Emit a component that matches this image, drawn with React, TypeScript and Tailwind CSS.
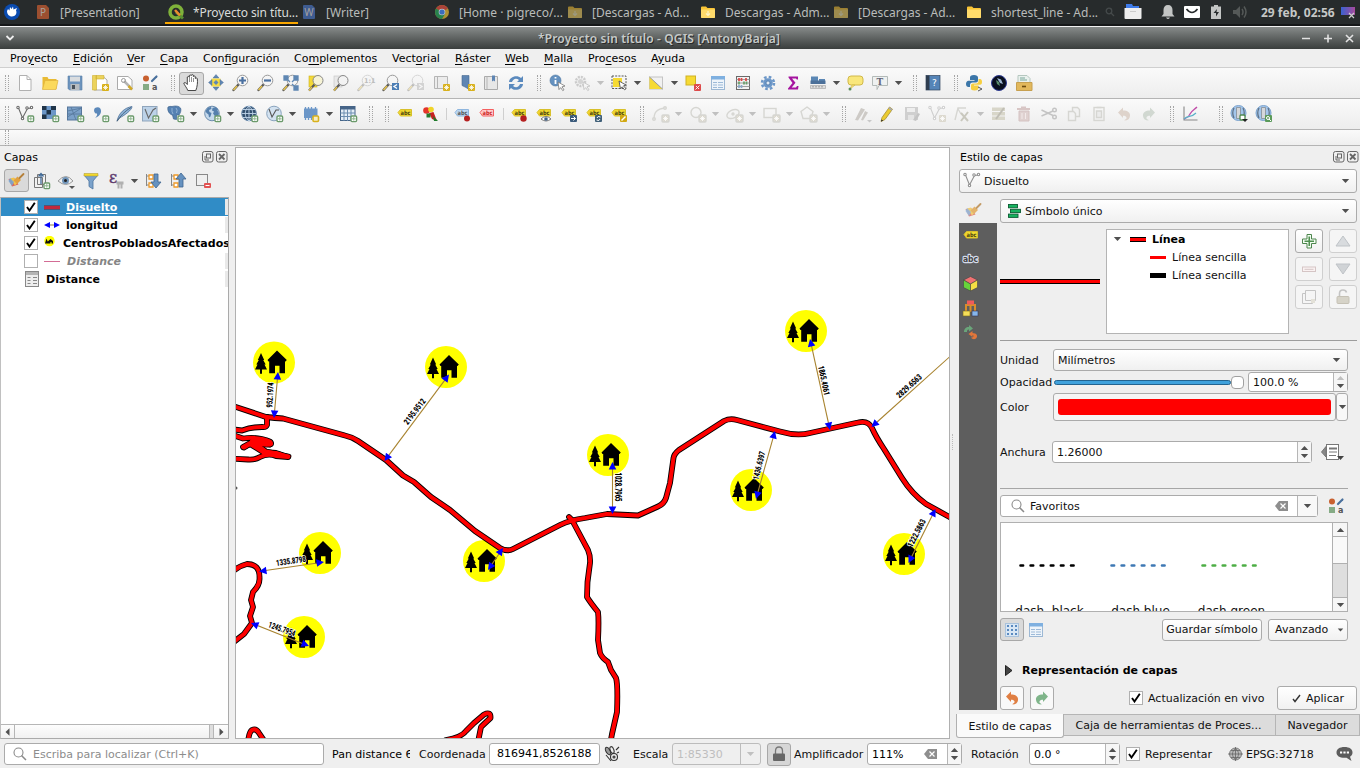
import React from 'react';
import type { ReactNode } from 'react';

/* ---------- icon primitives ---------- */

const Svg = ({ children }: { children: ReactNode }) => (
  <svg width="24" height="24" viewBox="0 0 24 24" fill="none" className="shrink-0">{children}</svg>
);
const Plus = ({ x = 15, y = 14 }) => (
  <g>
    <rect x={x} y={y} width="5.6" height="5.6" rx="1" fill="#fff" stroke="#6b9a6b" strokeWidth="1.4" />
    <path d={`M${x + 2.8} ${y + 1}v3.6M${x + 1} ${y + 2.8}h3.6`} stroke="#8fb58f" strokeWidth="1" />
  </g>
);
const Star = ({ x = 14, y = 13, c = '#d8b11c' }) => (
  <g>
    <rect x={x} y={y} width="7" height="7" rx="1" fill={c} />
    <path d={`M${x + 3.5} ${y + 1}v5M${x + 1} ${y + 3.5}h5M${x + 1.8} ${y + 1.8}l3.4 3.4M${x + 5.2} ${y + 1.8}l-3.4 3.4`} stroke="#fff" strokeWidth=".8" />
  </g>
);
const Lens = ({ children, dim }: { children?: ReactNode; dim?: boolean }) => (
  <Svg>
    <g opacity={dim ? 0.35 : 1}>
      <path d="M9.500 13.500l-5 5.500" stroke="#5a5a5a" strokeWidth="2.400" strokeLinecap="round" />
      <path d="M8 15l-3.500 4" stroke="#e8c44c" strokeWidth="1.500" />
      <circle cx="13.500" cy="9.500" r="5.300" fill="#f4f4f4" fillOpacity=".85" stroke="#9a9a9a" strokeWidth="1" />
      {children}
    </g>
  </Svg>
);
const Globe = ({ children, dark, map }: { children?: ReactNode; dark?: boolean; map?: boolean }) => (
  <Svg>
    <circle cx="12" cy="11.500" r="7.300" fill={dark ? '#33506f' : '#c5d9ec'} stroke="#6c8cad" />
    {map ? (
      <path d="M5.500 9l2.500-3.500 3-.500.500 2-2.500 1 .500 2 2 1-1 3.500-1.500 1-.500-3-2-1.500zM12.500 6l3-1 2.500 2-.500 1.500 1.500 3-1.500 3.500-2.500 1.500-.500-3-1.500-2 1-2-2-1z" fill="#5580ad" />
    ) : (
      <path d="M5 11.500h14M6 7.500h12M6 15.500h12M12 4v15M12 4c-5 4-5 11 0 15M12 4c5 4 5 11 0 15" stroke={dark ? '#bfd5ea' : '#53769b'} strokeWidth=".9" />
    )}
    {children}
  </Svg>
);
const BandGlobe = ({ children }: { children: ReactNode }) => (
  <Svg>
    <circle cx="11.500" cy="11" r="7.500" fill="#a3c6ec" stroke="#7ba2cc" />
    <path d="M7 6c-1.500 3-1.500 7 0 10M16 6c1.500 3 1.500 7 0 10" stroke="#5f7287" strokeWidth="1.300" />
    <path d="M9.500 5.500h4v11h-4z" fill="#d5d7da" stroke="#858d96" strokeWidth=".8" />
    {children}
  </Svg>
);
const VLine = ({ c = '#6a6a6a' }) => (
  <g stroke={c} strokeWidth="1.100">
    <path d="M5.500 6l4 10 5-9.500 4-.500" />
    <circle cx="5" cy="5.500" r="1.200" fill="#fff" /><circle cx="9.500" cy="16.500" r="1.200" fill="#fff" />
    <circle cx="14" cy="6" r="1.200" fill="#fff" /><circle cx="18.500" cy="5.500" r="1.200" fill="#fff" />
  </g>
);
const Tag = ({ c = '#f2d92f', s = '#d8c02c', t = '#4b4310', children }: { c?: string; s?: string; t?: string; children?: ReactNode }) => (
  <Svg>
    <path d="M5 10.500L7.500 7.500h11v6.500h-11z" fill={c} stroke={s} strokeWidth="1" />
    <text x="7.500" y="12.800" fontSize="6" fontWeight="700" fontFamily="DejaVu Sans" fill={t} textLength="10" lengthAdjust="spacingAndGlyphs">abc</text>
    {children}
  </Svg>
);
const Grey = ({ children }: { children: ReactNode }) => (
  <Svg><g stroke="#d6d6d2" strokeWidth="1.400">{children}</g></Svg>
);
const Undo = ({ c, flip }: { c: string; flip?: boolean }) => (
  <Svg>
    <path transform={flip ? 'translate(24 0) scale(-1 1)' : undefined} d="M6 10.500l5-5V8.500c4.500 0 7.500 2 7 5.500-.300 3-2.500 4.500-5.500 4.500 0-1.500 2.500-1 2-3-.300-1.200-1.500-1.800-3.500-1.800v2.300z" fill={c} />
  </Svg>
);
const StyleIcon = () => (
  <Svg>
    <circle cx="8" cy="7.500" r="3" fill="#c8602f" /><rect x="5" y="13" width="6" height="6" fill="#85ab85" />
    <path d="M14 10l4.500-4.500" stroke="#49709c" strokeWidth="2.200" strokeLinecap="round" />
    <text x="14" y="19" fontSize="8" fontWeight="700" fontFamily="DejaVu Sans" fill="#555">a</text>
  </Svg>
);
const TableIcon = () => (
  <Svg>
    <rect x="5.500" y="5.500" width="13" height="13" fill="#eef4fa" stroke="#9db8d4" /><path d="M5 5h14v3.500H5z" fill="#7fb0e0" />
    <path d="M7 11.500h4M12 11.500h5M7 14h4M12 14h5M7 16.500h4M12 16.500h5" stroke="#9dbad8" strokeWidth="1" />
  </Svg>
);
const Brush = () => (
  <Svg>
    <path d="M4.500 10l3.500 7.500 6.500-2-3.500-6z" fill="#dd665c" /><path d="M6 9.500l4-1 4 5-3 3z" fill="#f1c24b" /><path d="M4.500 12l1.500-3 4 4-2 4z" fill="#74a8d8" opacity=".85" />
    <path d="M9.500 11.500l4-4 3.500 3.500-4 4z" fill="#e0a040" /><path d="M15.500 9L19.500 5" stroke="#b5803a" strokeWidth="1.800" strokeLinecap="round" />
  </Svg>
);
const Caret = ({ dim }: { dim?: boolean }) => (
  <svg width="9" height="6" viewBox="0 0 9 6" className="shrink-0"><path d="M.8 1h7.400l-3.700 4z" fill={dim ? '#c0c0c0' : '#505050'} /></svg>
);
const Arrow = ({ dim }: { dim?: boolean }) => <div className="flex w-3 shrink-0 items-center justify-center"><Caret dim={dim} /></div>;
const Handle = ({ wide, first }: { wide?: boolean; first?: boolean }) => (
  <div className={`flex h-4 shrink-0 justify-end gap-0.5 pr-1 ${first ? 'w-[12.5px]' : wide ? 'w-[17px]' : 'w-4'}`}>
    <i className="h-full border-l border-dotted border-[#a5a5a5]" /><i className="h-full border-l border-dotted border-[#a5a5a5]" />
  </div>
);
const Sep = () => <div className="flex w-[7px] shrink-0 justify-center"><i className="h-3 w-px bg-[#cfcfcf]" /></div>;
const Slot = ({ children, on }: { children: ReactNode; on?: boolean }) => (
  <div className={on ? 'flex h-[23px] w-[25px] shrink-0 items-center justify-center rounded-[3px] border border-[#a8a8a8] bg-[#dadada]' : 'flex h-6 w-[25px] shrink-0 items-center justify-center'}>{children}</div>
);

/* ---------- top desktop panel ---------- */

const Folder = ({ dim }: { dim?: boolean }) => (
  <svg width="16" height="16" viewBox="0 0 16 16" opacity={dim ? 0.55 : 1}>
    <path d="M1 3.500Q1 2.500 2 2.500h4l1.500 1.500H14q1 0 1 1V13q0 1-1 1H2q-1 0-1-1z" fill="#fac536" /><path d="M1 5.500h14V13q0 1-1 1H2q-1 0-1-1z" fill="#ffdb6b" />
    <path d="M8 7v4M6 9.500l2 2 2-2" stroke="#fff5c8" strokeWidth="1.200" fill="none" />
  </svg>
);
const PlainFolder = () => (
  <svg width="16" height="16" viewBox="0 0 16 16">
    <path d="M1 3.500Q1 2.500 2 2.500h4l1.500 1.500H14q1 0 1 1V13q0 1-1 1H2q-1 0-1-1z" fill="#fac536" /><path d="M1 5.500h14V13q0 1-1 1H2q-1 0-1-1z" fill="#ffdb6b" />
  </svg>
);
const DocIcon = ({ c, t }: { c: string; t: string }) => (
  <svg width="16" height="16" viewBox="0 0 16 16"><path d="M2 2q0-1 1-1h8l3 3v10q0 1-1 1H3q-1 0-1-1z" fill={c} /><text x="8" y="12" fontSize="10" textAnchor="middle" fill="#a7a19d" fontFamily="Noto Sans">{t}</text></svg>
);
const QIcon = () => (
  <svg width="16" height="16" viewBox="0 0 16 16" fill="none"><circle cx="8" cy="8" r="6" stroke="#7fb23a" strokeWidth="3.500" /><path d="M8 8l7 6.500" stroke="#5b9030" strokeWidth="3" /><path d="M7 6l5 5.500" stroke="#ec8b2e" strokeWidth="2.500" /></svg>
);
const Chrome = () => (
  <svg width="16" height="16" viewBox="0 0 16 16" opacity=".72"><circle cx="8" cy="8" r="7" fill="#e2b735" /><path d="M8 8L2 4.500a7 7 0 0 1 12 0z" fill="#dd4b3e" /><path d="M8 8L2 4.500A7 7 0 0 0 8 15l3-5z" fill="#27a35a" /><circle cx="8" cy="8" r="3.300" fill="#fff" /><circle cx="8" cy="8" r="2.600" fill="#4285f4" /></svg>
);

const tasks: { t: string; i: ReactNode; on?: boolean; hi?: boolean }[] = [
  { t: '[Presentation]', i: <DocIcon c="#9c4f30" t="P" /> },
  { t: '*Proyecto sin títu...', i: <QIcon />, on: true, hi: true },
  { t: '[Writer]', i: <DocIcon c="#3e5c91" t="W" /> },
  { t: '[Home · pigreco/...', i: <Chrome /> },
  { t: '[Descargas - Ad...', i: <Folder dim /> },
  { t: 'Descargas - Adm...', i: <Folder /> },
  { t: '[Descargas - Ad...', i: <Folder dim /> },
  { t: 'shortest_line - Ad...', i: <PlainFolder /> },
];

const TopPanel = () => (
  <div className="flex h-[24px] shrink-0 items-center bg-[#272b2c] font-['Noto_Sans',sans-serif] text-[12px] text-[#b9bcba]">
    <div className="flex w-8 shrink-0 pl-1">
      <svg width="16" height="16" viewBox="0 0 16 16"><circle cx="8" cy="8" r="8" fill="#0a4bb0" /><path d="M3 7l1-2 1.500 1.500L6 3l1.500 2L9 2.500l.500 3L13 4l-1 2.500c1.500 3-1 6-4 6s-5-2.500-5-5.500z" fill="#fff" /></svg>
    </div>
    {tasks.map((k, i) => (
      <div key={i} className={k.on ? 'flex h-6 w-[133px] shrink-0 items-center gap-[9px] border-b-2 border-[#f9a700] pl-[3px] pt-0.5' : 'flex h-6 w-[133px] shrink-0 items-center gap-[9px] pl-[3px]'}>
        <div className="shrink-0">{k.i}</div><span className={k.hi ? 'whitespace-nowrap tracking-[-0.1px] text-[#dadcda]' : 'whitespace-nowrap'}>{k.t}</span>
      </div>
    ))}
    <div className="ml-[9px] flex w-[13px]"><svg width="10" height="10" viewBox="0 0 10 10" fill="none" stroke="#454a4b" strokeWidth="1.300"><circle cx="4" cy="4" r="2.800" /><path d="M6 6l3 3" /></svg></div>
    <svg className="ml-[6px] shrink-0" width="18" height="18" viewBox="0 0 18 18"><path d="M2 1h6l1 2h6v9H2z" fill="#3e7bea" /><path d="M.500 5h17v10q0 1-1 1h-15q-1 0-1-1z" fill="#eee" /><path d="M6 8.500h6" stroke="#ccc" /></svg>
    <svg className="ml-[18px] shrink-0" width="16" height="16" viewBox="0 0 16 16" fill="#c3c5c4"><path d="M8 1c-3 0-4.500 2-4.500 5v4L1.500 12.500h13L12.500 10V6c0-3-1.500-5-4.500-5zM6 13.500h4Q8 16.500 6 13.500z" /></svg>
    <svg className="ml-2 shrink-0" width="16" height="14" viewBox="0 0 16 14"><rect y="1" width="16" height="12" rx="1" fill="#fff" /><path d="M2.500 4Q8 11 13.500 4" stroke="#272b2c" strokeWidth="1.600" fill="none" /></svg>
    <svg className="ml-2 shrink-0" width="16" height="16" viewBox="0 0 16 16"><path d="M3 2.500h3V1h4v1.500h3V15H3z" fill="#c3c5c4" /><path d="M9 5L5.500 9H8v3.500L11 8H8.500z" fill="#272b2c" /></svg>
    <svg className="ml-2 shrink-0" width="16" height="16" viewBox="0 0 16 16" fill="none" stroke="#555958" strokeWidth="1.500"><path d="M1 6h3l4-4v12l-4-4H1z" fill="#555958" stroke="none" /><path d="M10 5q2 3 0 6M12 2.500q4 5.500 0 11" /></svg>
    <span className="ml-[13px] w-[79px] shrink-0 whitespace-nowrap text-[12px] font-bold text-[#c5c7c6]">29 feb, 02:56</span>
    <svg className="shrink-0" width="16" height="14" viewBox="0 0 16 14"><defs><linearGradient id="mon"><stop stopColor="#3a62d0" /><stop offset="1" stopColor="#a74a9c" /></linearGradient></defs><rect x="1" y="2" width="14" height="8" fill="url(#mon)" /><path d="M9 8l5 5M14 8l-5 5" stroke="#ccc" strokeWidth="1.200" /></svg>
  </div>
);

const TitleBar = () => (
  <div className="flex h-[25px] shrink-0 items-center justify-between border-t-2 border-[#161819] bg-gradient-to-b from-[#8b8f8e] to-[#3a3e3d] px-[5px] shadow-[inset_0_1px_0_#f2f2f2]">
    <svg width="12" height="12" viewBox="0 0 12 12" fill="none" stroke="#eee" strokeWidth="1.800"><path d="M1.500 4l3.500 3.500L8.500 4" /></svg>
    <span className="whitespace-nowrap pl-0.5 pt-0.5 font-['Noto_Sans',sans-serif] text-[12px] font-semibold tracking-[0.15px] text-[#c6cac9] [text-shadow:1px_1px_0_#2a2a2a]">*Proyecto sin título - QGIS [AntonyBarja]</span>
    <svg width="56" height="12" viewBox="0 0 56 12" fill="none" stroke="#e2e2e2" strokeWidth="1.600"><path d="M3 6.500h8M25 6.500h8M29 2.500v8M47 3l7 7M54 3l-7 7" /></svg>
  </div>
);

const menus: [string, string, string, string][] = [
  ['Pro', 'y', 'ecto', 'w-[63px]'], ['', 'E', 'dición', 'w-[54px]'], ['', 'V', 'er', 'w-[33px]'], ['', 'C', 'apa', 'w-[43px]'],
  ['Con', 'f', 'iguración', 'w-[91px]'], ['Co', 'm', 'plementos', 'w-[98px]'], ['Vect', 'o', 'rial', 'w-[63px]'], ['', 'R', 'áster', 'w-[50px]'],
  ['', 'W', 'eb', 'w-[39px]'], ['', 'M', 'alla', 'w-[44px]'], ['Pro', 'c', 'esos', 'w-[63px]'], ['A', 'y', 'uda', 'w-[60px]'],
];

const MenuBar = () => (
  <div className="flex h-[19px] shrink-0 items-center border-b border-[#cfcfcf] pl-[10px] text-black">
    {menus.map(([a, b, c, w]) => (
      <span key={a + b + c} className={`${w} shrink-0 whitespace-nowrap`}>{a}<u className="underline-offset-2">{b}</u>{c}</span>
    ))}
  </div>
);

/* ---------- toolbars ---------- */

const ToolRow1 = () => (
  <div className="flex h-[31px] shrink-0 items-center border-b border-[#b4b4b4] bg-gradient-to-b from-[#fafafa] to-[#ededed]">
    <Handle first />
    <Slot><Svg><path d="M6.500 4.500h7.500l4 4V19.500H6.500z" fill="#fff" stroke="#b0b0b0" /><path d="M14 4.500v4h4" stroke="#b0b0b0" /></Svg></Slot>
    <Slot><Svg><path d="M4.500 6h5l1 2h8v10h-14z" fill="#e9bb35" /><path d="M4.500 18.500L7 9.500h13l-2 9z" fill="#fbd95c" stroke="#dfb23c" strokeWidth=".7" /></Svg></Slot>
    <Slot><Svg><path d="M5 5h14v14H6.500L5 17.500z" fill="#6c93bd" stroke="#5a7fa8" strokeWidth=".6" /><rect x="7" y="5.500" width="10" height="5" fill="#d9dcdf" /><rect x="7.500" y="13" width="9" height="6" fill="#b8bcc0" /><rect x="9" y="14" width="3" height="4" fill="#49515a" /></Svg></Slot>
    <Slot><Svg><path d="M6 5.500h9l4 3.500v10H6z" fill="#fff" stroke="#aaa" /><path d="M4.500 4.500h4V19h-4zM8 4.500h8v3.500H8z" fill="#ecd35c" stroke="#cfae30" strokeWidth=".6" /><Star /></Svg></Slot>
    <Slot><Svg><path d="M4.500 5.500h10.500l4 3.500v9.500H4.500z" fill="#fff" stroke="#aaa" /><path d="M11 10l6 6" stroke="#b5b5b5" strokeWidth="2.500" /><path d="M15.500 15l3.500 3.500" stroke="#d2a926" strokeWidth="2.500" /><circle cx="10.500" cy="9.500" r="2" stroke="#999" /></Svg></Slot>
    <Slot><StyleIcon /></Slot>
    <Handle />
    <Slot on><Svg><path d="M8 20c-1-3-4-6-4-7.500 1-1 2.500 0 3.500 1.500V6.500q1-1 2 0V5q1-1 2 0v-.500q1-1 2 0V6q1-1 2 0v2q1-1 2 0c.500 4 0 8-1.500 12z" transform="translate(.8 -.5)" fill="#fff" stroke="#333" strokeWidth=".9" /><path d="M10.500 6v5M12.500 6v5M14.500 7v4" stroke="#777" strokeWidth=".8" /></Svg></Slot>
    <Slot><Svg><path d="M7.500 7.500h9v8h-9z" fill="#f6dc45" /><path d="M12 3.500l3 3.500H9zM12 19.500l3-3.500H9zM4.500 11.500l3.500-3v6zM19.500 11.500l-3.500-3v6z" fill="#5f87b5" stroke="#47688f" strokeWidth=".4" /><path d="M12 9l2.500 2.500L12 14l-2.500-2.500z" fill="#5f87b5" /></Svg></Slot>
    <Slot><Lens><path d="M13.500 6v7M10 9.500h7" stroke="#4a70a0" strokeWidth="2.200" /></Lens></Slot>
    <Slot><Lens><path d="M10 9.500h7" stroke="#4a70a0" strokeWidth="2.200" /></Lens></Slot>
    <Slot><Lens><path d="M5 5h4v4H5zM15 5h4v4h-4zM15 15h4v4h-4zM9 9l2 2M15 9l-2 2M15 15l-2-2" fill="#5f87b3" stroke="#5f87b3" strokeWidth="1.300" /></Lens></Slot>
    <Slot><Svg><rect x="5" y="5" width="8" height="11" fill="#f4d936" stroke="#c9ae20" strokeWidth=".6" /><path d="M10.500 13.500l-5.500 6" stroke="#5a5a5a" strokeWidth="2.200" /><path d="M8 16l-3 3.500" stroke="#e8c44c" strokeWidth="1.300" /><circle cx="14" cy="9.500" r="5" fill="#f6f3d5" stroke="#888" /></Svg></Slot>
    <Slot><Svg><rect x="5" y="5" width="8" height="11" fill="#e9e9e9" stroke="#c4c4c4" strokeWidth=".6" /><path d="M10.500 13.500l-5.500 6" stroke="#5a5a5a" strokeWidth="2.200" /><path d="M8 16l-3 3.500" stroke="#e8c44c" strokeWidth="1.300" /><circle cx="14" cy="9.500" r="5" fill="#f3f3f3" stroke="#888" /></Svg></Slot>
    <Slot><Lens dim><text x="10" y="12" fontSize="6.500" fontWeight="700" fontFamily="DejaVu Sans" fill="#555">1:1</text></Lens></Slot>
    <Slot><Lens><rect x="13" y="12" width="7" height="7" fill="#4c7eb5" /><path d="M18 13.500l-3 2 3 2" stroke="#fff" strokeWidth="1.300" /></Lens></Slot>
    <Slot><Lens dim><rect x="13" y="12" width="7" height="7" fill="#999" /><path d="M15 13.500l3 2-3 2" stroke="#fff" strokeWidth="1.300" /></Lens></Slot>
    <Slot><Svg><path d="M5.500 5.500h13v12h-13z" fill="#ececec" stroke="#b5b5b5" /><path d="M8.500 5.500v12" stroke="#b5b5b5" /><Star /></Svg></Slot>
    <Slot><Svg><path d="M8 4.500h7v14l-3-2-4-2z" fill="#5e85b3" stroke="#46688f" strokeWidth=".6" /><Star /></Svg></Slot>
    <Slot><Svg><path d="M5.500 5.500h13v13h-13z" fill="#e7e7e7" stroke="#aaa" /><path d="M8 5.500v13" stroke="#b5b5b5" /><path d="M13 4.500h3v6l-1.500-1-1.500 1z" fill="#5e85b3" /></Svg></Slot>
    <Slot><Svg><path d="M5 11c0-5 8-8 12-4l2-2v6h-6l2-2c-3-2.500-6-1-7 2zM19 13c0 5-8 8-12 4l-2 2v-6h6l-2 2c3 2.500 6 1 7-2z" fill="#5b8abe" /></Svg></Slot>
    <Handle />
    <Slot><Svg><circle cx="10.500" cy="9.500" r="5.500" fill="#6491c0" stroke="#4c739e" strokeWidth=".6" /><path d="M10.500 9v4M10.500 6v1.500" stroke="#fff" strokeWidth="1.800" /><path d="M13 11l7 4-3 .8 2 3-1.300.8-2-3-1.700 2z" fill="#fff" stroke="#777" strokeWidth=".8" /></Svg></Slot>
    <Slot><Svg><g opacity=".25"><circle cx="10.500" cy="10.500" r="4.500" stroke="#555" strokeWidth="2.500" strokeDasharray="2 1" /><circle cx="10.500" cy="10.500" r="2.500" fill="#777" /><path d="M13 11l7 4-3 .8 2 3-1.300.8-2-3-1.700 2z" fill="#fff" stroke="#555" /></g></Svg></Slot>
    <Arrow dim />
    <Slot><Svg><rect x="5" y="5" width="14" height="12.500" stroke="#555" strokeDasharray="2 1.200" /><rect x="6" y="7" width="9" height="9" fill="#f6da33" /><path d="M12 10l7 4-2.500.8 2.500 3-1.500 1-2.300-3-1.700 2z" fill="#fff" stroke="#555" strokeWidth=".9" /></Svg></Slot>
    <Arrow />
    <Slot><Svg><rect x="5.500" y="6" width="13" height="12" fill="#f1f1f1" stroke="#c4c4c4" /><path d="M5.500 6l13 12h-13z" fill="#f6da33" /><path d="M5.500 6l13 12" stroke="#999" /></Svg></Slot>
    <Arrow />
    <Slot><Svg><rect x="5" y="5" width="9.500" height="9" fill="#f6da33" stroke="#cfb224" /><rect x="13" y="13" width="7" height="7" rx="1" fill="#dd4b4b" /><path d="M14.500 18.500l4-4M15 15l3 3" stroke="#fff" strokeWidth=".9" /></Svg></Slot>
    <Slot><TableIcon /></Slot>
    <Slot><Svg><rect x="5.500" y="5.500" width="13" height="13" fill="#f2f2f2" stroke="#6a6a6a" /><path d="M5 8.500h14M5 12h14M5 15.500h14" stroke="#888" strokeWidth=".8" /><path d="M8 7v3M10.500 7v3M15 7v3" stroke="#d44" strokeWidth="1.700" /><path d="M8 10.500v3M13 10.500v3M15.500 10.500v3" stroke="#6a9f6a" strokeWidth="1.700" /><path d="M8 14v3M10.500 14v3" stroke="#8aa9ca" strokeWidth="1.700" /></Svg></Slot>
    <Slot><Svg><circle cx="12" cy="12" r="6" stroke="#6c97c8" strokeWidth="2.600" strokeDasharray="2.600 2.110" /><circle cx="12" cy="12" r="4.800" fill="#6c97c8" /><circle cx="12" cy="12" r="2" fill="#dfeaf5" stroke="#426ea0" strokeWidth=".7" /></Svg></Slot>
    <Slot><Svg><path d="M7.500 5.500H17v3h-1.200L15 7.500h-4l3.500 4.300-3.800 4.700H15l1-1.500h1.500l-.500 3.500H7v-1l4.500-5.500L7.500 6.500z" fill="#a5149f" /></Svg></Slot>
    <Slot><Svg><path d="M5 5.500h7v5H5zM13 8h6v3h-6z" fill="#5b87b5" /><path d="M4.500 9.500h15v3.500h-15z" fill="#4c7099" /><path d="M4.500 14.500h15v3h-15z" fill="#ddd" stroke="#aaa" strokeWidth=".7" /><path d="M7 15v1.500M10 15v1.500M13 15v1.500M16 15v1.500" stroke="#777" strokeWidth=".8" /></Svg></Slot>
    <Arrow />
    <Slot><Svg><rect x="5" y="5" width="15" height="9" rx="3" fill="#f9e77b" stroke="#d0b84a" /><path d="M9 14l-2 4 5-4z" fill="#f9e77b" stroke="#d0b84a" strokeWidth=".7" /><circle cx="7" cy="18" r="1.500" fill="#5b8c5b" /></Svg></Slot>
    <Slot><Svg><path d="M4.500 5.500h15v9H11l-2 4v-4H4.500z" fill="#eef1f1" stroke="#b3bab8" /><text x="8.500" y="13.500" fontSize="9" fontWeight="700" fontFamily="DejaVu Serif" fill="#667">T</text></Svg></Slot>
    <Arrow />
    <Handle />
    <Slot><Svg><rect x="5" y="4.500" width="14" height="14.500" fill="#5584b7" stroke="#33475e" strokeWidth=".7" /><path d="M5 4.500h3.500V19H5z" fill="#2e3d4f" /><text x="11" y="15" fontSize="9" fontFamily="DejaVu Sans" fill="#fff">?</text></Svg></Slot>
    <Handle />
    <Slot><Svg><path d="M12 4c-3 0-4 1-4 2.500V9h4.500v.700H6.500C5 9.700 4 11 4 13s1 3 2.500 3H8v-2c0-1.500 1-2.500 2.500-2.500H14c1.200 0 2-.8 2-2v-3C16 5 14.500 4 12 4z" fill="#3b76a8" /><path d="M12.500 19.500c3 0 4-1 4-2.500v-2.500H12v-.700h6c1.500 0 2-1 2-3S19 8 18 8h-1.500v2c0 1.500-1 2.500-2.500 2.500h-3c-1.200 0-2 .8-2 2v3c0 1.200 1 2 3.500 2z" fill="#f7cf3f" /><path d="M16 16l4 2-4 2" stroke="#555" /></Svg></Slot>
    <Slot><Svg><circle cx="12" cy="12" r="7.500" fill="#0a1020" stroke="#2f3c94" strokeWidth="1" /><path d="M10 7l4 1.500 2 4.500-3-1z" fill="#9fb9d4" /><path d="M9 9l3 2 1 4-3-2z" fill="#5b8c6c" /></Svg></Slot>
    <Slot><Svg><path d="M6 4.500h9l3 3v6H6z" fill="#eaf1ee" stroke="#b5c7bf" /><path d="M8 7h5M8 9h7" stroke="#7ba89a" /><path d="M4.500 11.500h15.500v8H4.500z" fill="#e2b85c" stroke="#c7a050" /><path d="M10 15.500h4" stroke="#6b4b10" strokeWidth="1.600" /></Svg></Slot>
  </div>
);

const GStar = () => <Star c="#dcd9cf" />;

const ToolRow2 = () => (
  <div className="flex h-[31px] shrink-0 items-center border-b border-[#b4b4b4] bg-gradient-to-b from-[#fafafa] to-[#ededed]">
    <Handle first />
    <Slot><Svg><VLine /><Plus /></Svg></Slot>
    <Slot><Svg><rect x="4" y="4" width="14" height="13" fill="#6c97c8" /><path d="M4 4h4.500v4H4zM13 4h5v4h-5zM8.500 8H13v4.500H8.500zM4 12.500h4.500V17H4z" fill="#1f3448" /><Plus /></Svg></Slot>
    <Slot><Svg><rect x="4.500" y="5" width="14" height="13" fill="#7ba0c8" stroke="#56779b" /><path d="M4.500 9l14-3M4.500 15l14-9M8 5l5 13M4.500 12h14" stroke="#56779b" strokeWidth=".8" /><Plus /></Svg></Slot>
    <Slot><Svg><path d="M7 6c3.500-2 6.500 0 6 4-.5 3-3 5-6 6 1.500-1.500 2.500-3 2-4.500C6.500 12 5 8 7 6z" fill="#5b88ba" /><Plus /></Svg></Slot>
    <Slot><Svg><path d="M4 19C6 11 11 6 19 4.500 19 8 12 13 6.500 16z" fill="#8fb4da" stroke="#4b6f95" strokeWidth=".8" /><path d="M4 19.500C7 14 12 9 18 5.500" stroke="#3b556f" strokeWidth=".8" /><Plus /></Svg></Slot>
    <Slot><Svg><rect x="4.500" y="4.500" width="14.500" height="14.500" fill="#bcd2e8" stroke="#8fa5bc" /><path d="M7 7l3.500 9L15 8l3-2" stroke="#666" strokeWidth="1.100" /><Plus /></Svg></Slot>
    <Slot><Svg><path d="M5 5q2-1 4-.500 6-1.500 8.500 1.500c1 2 0 5-1.500 7h-2.500v4.500l-3-.5-1-4C6.500 12.500 4 8.500 5 5z" fill="#5581b2" stroke="#41658f" strokeWidth=".7" /><path d="M9 6q-.5 4 1 6M13 6q2 2 .5 5" stroke="#a9c5e2" strokeWidth=".7" /><Plus /></Svg></Slot><Arrow />
    <Slot><Globe map><Plus /></Globe></Slot><Arrow />
    <Slot><Globe dark><Plus /></Globe></Slot>
    <Slot><Svg><circle cx="12" cy="11.500" r="7.300" fill="#d3e2f0" stroke="#8aa4be" /><path d="M7 7l3 8 4-7h3" stroke="#555" strokeWidth="1.100" /><Plus /></Svg></Slot><Arrow />
    <Slot><Svg><path d="M5 6.500h13.500V16H5z" fill="#6c97c8" /><path d="M6.500 5v13M9.500 5v13M12.500 5v13M16.500 5v13" stroke="#6c97c8" strokeWidth="1.300" /><rect x="14" y="14" width="5.500" height="5.500" rx="1" fill="#f6edc4" stroke="#d8b11c" strokeWidth="1.600" /></Svg></Slot><Arrow />
    <Slot><Svg><rect x="4.500" y="4.500" width="14.500" height="14" fill="#e4eef7" stroke="#466588" /><path d="M4.500 4.500H19v3H4.500z" fill="#466588" /><path d="M4.500 11H19M4.500 14.500H19M8 7v12M11.500 7v12M15 7v12" stroke="#6b8db0" /><Plus /></Svg></Slot>
    <Handle /><Handle />
    <Slot><Tag /></Slot>
    <Slot><Svg><path d="M11 11l4.500-1 3.500 9-5-2z" fill="#c81e1e" /><circle cx="8.500" cy="8.500" r="3.300" fill="#e4342a" /><circle cx="13" cy="7.500" r="2.800" fill="#f0d429" /><rect x="8.500" y="11.500" width="4" height="4" fill="#237a2d" /><path d="M15 14l5 5h-4z" fill="#1e7b2a" /></Svg></Slot>
    <Sep />
    <Slot><Tag c="#bcd8f4" s="#8fb6de" t="#555"><circle cx="17" cy="16.500" r="3" fill="#b52020" /></Tag></Slot>
    <Slot><Tag c="#fcc" s="#f46060" t="#c22" /></Slot>
    <Sep />
    <Slot><Tag><circle cx="16.500" cy="16.500" r="3.200" fill="#b52020" /></Tag></Slot>
    <Slot><Tag><path d="M9 17q5-5 10 0-5 4-10 0z" fill="#fff" stroke="#777" /><circle cx="14" cy="17" r="1.800" fill="#40638c" /></Tag></Slot>
    <Slot><Tag><rect x="13" y="13" width="7" height="7" rx="1" fill="#3b5b7c" /><path d="M14 16.500h4.500M16.500 14.500l2 2-2 2" stroke="#fff" /></Tag></Slot>
    <Slot><Tag><rect x="13" y="13" width="7" height="7" rx="1" fill="#3f5f78" /><path d="M18.500 15q-3-1.500-3.500 1M14.500 18q3 1.500 3.500-1" stroke="#fff" /></Tag></Slot>
    <Slot><Tag><rect x="13" y="13" width="7" height="7" rx="1" fill="#d2a914" /><path d="M14.500 18.500l4-4" stroke="#fff" strokeWidth="1.500" /></Tag></Slot>
    <Handle />
    <Slot><Grey><path d="M6 17c0-7 3-10 11-11" /><circle cx="6" cy="17" r="1.300" fill="#eee" /><circle cx="17" cy="6" r="1.300" fill="#eee" /><GStar /></Grey></Slot><Arrow dim />
    <Slot><Grey><circle cx="11" cy="10.500" r="5" /><GStar /></Grey></Slot><Arrow dim />
    <Slot><Grey><ellipse cx="11" cy="12" rx="6.500" ry="4" transform="rotate(-25 11 12)" /><circle cx="11" cy="12" r="1" /><GStar /></Grey></Slot><Arrow dim />
    <Slot><Grey><rect x="5" y="6.500" width="12" height="9" /><GStar /></Grey></Slot><Arrow dim />
    <Slot><Grey><path d="M11 5l6 4.500-2 7H7l-2-7z" /><GStar /></Grey></Slot><Arrow dim />
    <Handle wide />
    <Slot><Svg><path d="M5 18l6-12 4 1.500-7 11zM11 18l4-9 3 1.500-5 8z" fill="#cdcac6" /><path d="M17 18h5l-2.500 2.500z" fill="#c8c8c8" /></Svg></Slot>
    <Slot><Svg><path d="M6 19.500l1-4L14.500 5l3 2.200L10 17.500z" fill="#ebcb30" stroke="#a58e35" strokeWidth=".8" /><path d="M14.500 5l3 2.200-1 1.500-3-2z" fill="#aaa" /><path d="M6 19.500l.600-2 1.600 1.200z" fill="#222" /></Svg></Slot>
    <Slot><Svg><path d="M5 5h13v13H5z" fill="#cfcfcf" /><rect x="7" y="6" width="8" height="4" fill="#eee" /><rect x="8" y="13" width="6" height="5" fill="#e4e4e4" /><path d="M13 18l5-7 2 1-4 7z" fill="#c4c4c4" /></Svg></Slot>
    <Slot><Svg><VLine c="#cfcfcf" /><GStar /></Svg></Slot>
    <Slot><Grey><path d="M5 18L8 6h8M8 7l3 5" /><path d="M11 11l7 8M18 10l-7 9" stroke="#c9c8be" strokeWidth="2" /></Grey></Slot><Arrow dim />
    <Slot><Svg><path d="M5 5.500h13v3.500H5zM5 10h13v3.500H5zM5 14.500h13V18H5z" fill="#d8d6c9" /><path d="M9 17L17 6" stroke="#c0beb5" strokeWidth="2" /></Svg></Slot>
    <Slot><Svg><path d="M5 7h13M9 5.500h5" stroke="#d8c6c5" strokeWidth="2" /><path d="M7 9h10v10H7z" fill="#dfd1d0" stroke="#d4c2c1" /><path d="M10 11v6M13.500 11v6" stroke="#f2eaea" /></Svg></Slot>
    <Slot><Grey><path d="M4.500 8L16 13.500M4.500 14L16 9" stroke="#c4c4c4" /><circle cx="17.500" cy="15" r="1.800" stroke="#c4c4c4" /><circle cx="17.500" cy="8" r="1.800" stroke="#c4c4c4" /></Grey></Slot>
    <Slot><Grey><path d="M10.500 5.500h5l2 2v7h-7z" fill="#f2f2f2" /><path d="M6.500 9.500h5l2 2v7h-7z" fill="#f2f2f2" /></Grey></Slot>
    <Slot><Grey><rect x="7" y="5.500" width="10" height="13" /><path d="M9.500 5.500h5M9.500 9v6.500h5V9z" fill="#ebebeb" /></Grey></Slot>
    <Slot><Undo c="#ded3cb" /></Slot>
    <Slot><Undo c="#d1d8d1" flip /></Slot>
    <Handle />
    <Slot><Svg><path d="M6 4.500V18h13.500" stroke="#888" strokeWidth="1.100" /><path d="M6 17c3-1 4-1 6-5s4-4 7-7" stroke="#c04aa8" strokeWidth="1.300" /><path d="M6 17c4-4 7-1 12-6" stroke="#5ab0c8" strokeWidth="1.200" /></Svg></Slot>
    <div className="w-2 shrink-0" />
    <Handle />
    <Slot><BandGlobe><rect x="13" y="13" width="5" height="5" rx="1" fill="#fff" stroke="#4f8a4f" strokeWidth="1.300" /><path d="M15 17h6l-3 3z" fill="#222" /></BandGlobe></Slot>
    <Slot><BandGlobe><rect x="13" y="13" width="7" height="7" rx="1" fill="#5a9a5a" /><circle cx="16" cy="16" r="1.500" stroke="#fff" /><path d="M17 17l2 2" stroke="#fff" /></BandGlobe></Slot>
  </div>
);

/* ---------- dock title & shared widgets ---------- */

const DockTitle = ({ t }: { t: string }) => (
  <div className="flex h-[21px] shrink-0 items-center justify-between text-black">
    <span className="pt-px">{t}</span>
    <svg width="26" height="12" viewBox="0 0 26 12" fill="none" stroke="#666">
      <rect x=".5" y=".5" width="10.500" height="10.500" rx="2" /><rect x="4.500" y="3" width="4" height="4" /><path d="M3 5v4h4" />
      <rect x="14.500" y=".5" width="10.500" height="10.500" rx="2" /><path d="M17 3l5.500 5.500M22.500 3L17 8.500" strokeWidth="1.800" />
    </svg>
  </div>
);
const Check = ({ on }: { on?: boolean }) => (
  <div className="flex size-[14px] shrink-0 items-center justify-center border border-[#b0b0b0] bg-white">
    {on && <svg width="10" height="10" viewBox="0 0 10 10" fill="none" stroke="#000" strokeWidth="1.900"><path d="M1 5l2.500 3.500L8.800 .8" /></svg>}
  </div>
);
const Spin = ({ dimTop }: { dimTop?: boolean }) => (
  <div className="flex h-full w-[14px] shrink-0 flex-col items-center justify-center gap-0.5 self-stretch border-l border-[#b6b6b6] bg-[#f6f6f6]">
    <div className="rotate-180"><Caret dim={dimTop} /></div><Caret />
  </div>
);
const Mag = () => (
  <svg width="14" height="14" viewBox="0 0 14 14" fill="none" stroke="#8a8a8a" className="shrink-0"><circle cx="5.500" cy="5.500" r="4.500" strokeWidth="1.100" /><path d="M8.500 8.500l4.500 4.500" strokeWidth="1.500" /></svg>
);
const Clear = () => (
  <svg width="13" height="10" viewBox="0 0 13 10" className="shrink-0"><path d="M4 0h9v10H4L0 5z" fill="#8e8e8e" /><path d="M5.500 2.500l5 5M10.500 2.500l-5 5" stroke="#fff" strokeWidth="1.200" /></svg>
);

/* ---------- layers dock ---------- */

const Row = ({ children, sel }: { children: ReactNode; sel?: boolean }) => (
  <div className={sel ? 'flex h-[18px] items-center overflow-hidden bg-[#308cc6] pl-[23px] text-white' : 'flex h-[18px] items-center overflow-hidden pl-[23px] text-black'}>
    {children}<i className="ml-auto h-4 w-[3px] shrink-0 bg-[#e9e9e9]" />
  </div>
);

const Layers = () => (
  <div className="flex w-[229px] shrink-0 flex-col">
    <div className="pl-1 pr-px"><DockTitle t="Capas" /></div>
    <div className="flex h-[30px] shrink-0 items-center pb-[3px] pl-[3.5px]">
      <Slot on><Brush /></Slot>
      <Slot><Svg><path d="M5.500 8.500h8v10h-8zM8.500 5.500h8v10h-8z" fill="#f2f2f2" stroke="#777" /><path d="M12 15V5M9.500 7.500L12 4.500l2.500 3" stroke="#426b98" strokeWidth="1.300" /><Plus /></Svg></Slot>
      <Slot><Svg><path d="M4 12q8-9 15 0-7 7-15 0z" fill="#f0f0f0" stroke="#999" /><circle cx="11.500" cy="11.500" r="3.500" fill="#6f93b8" /><circle cx="11.500" cy="11.500" r="1.500" fill="#222" /><path d="M15 17h6l-3 3z" fill="#555" /></Svg></Slot>
      <Slot><Svg><path d="M5 6h14l-5 6v8l-4-2.500V12z" fill="#7ba2cb" stroke="#4d749f" strokeWidth=".8" /><path d="M5 4.500h14v2.500H5z" fill="#f2d92f" stroke="#a9952a" strokeWidth=".5" /></Svg></Slot>
      <Slot><Svg><text x="5" y="14" fontSize="16" fontFamily="DejaVu Serif" fill="#5d3a6e" stroke="#5d3a6e" strokeWidth=".4">ε</text><path d="M12.500 12.500h7v3h-1v4h-2v-4h-1v4h-2v-4h-1z" fill="#b0b0b0" /></Svg></Slot><Arrow />
      <Slot><Svg><path d="M5.500 5v12M5.500 7h5M5.500 16h5" stroke="#888" /><path d="M8 6h4v4H8zM8 14h4v4H8z" fill="#fff" stroke="#ef9b2a" strokeWidth="1.300" /><path d="M13 5h4v8h3l-5 6-5-6h3z" fill="#6692c0" stroke="#3f6690" strokeWidth=".8" /></Svg></Slot>
      <Slot><Svg><path d="M5.500 5v12M5.500 7h5M5.500 16h5" stroke="#888" /><path d="M8 6h4v4H8zM8 14h4v4H8z" fill="#fff" stroke="#ef9b2a" strokeWidth="1.300" /><path d="M13 18h4v-8h3l-5-6-5 6h3z" fill="#6692c0" stroke="#3f6690" strokeWidth=".8" /></Svg></Slot>
      <Slot><Svg><rect x="5.500" y="5.500" width="11" height="11" stroke="#888" /><rect x="13" y="14" width="7" height="5" rx="1" fill="#e25252" /><path d="M14.500 16.500h4" stroke="#fff" /></Svg></Slot>
    </div>
    <div className="flex flex-1 flex-col border border-l-[#c0c0c0] border-[#aaa] bg-white font-bold">
      <div className="flex-1">
        <Row sel><Check on /><div className="ml-[6px] h-[5px] w-4 shrink-0 border-y border-[#4d5674] bg-[#c2283c]" /><u className="ml-[6px] underline-offset-2">Disuelto</u></Row>
        <Row><Check on /><svg className="ml-[6px] shrink-0" width="16" height="8" viewBox="0 0 16 8"><path d="M5 4h6" stroke="#8a7a40" /><path d="M0 4l6-3v6zM16 4l-6-3v6z" fill="#00f" /></svg><span className="ml-[6px]">longitud</span></Row>
        <Row><Check on /><svg className="ml-[6px] shrink-0" width="12" height="14" viewBox="0 0 12 14"><circle cx="5.500" cy="5" r="5.200" fill="#ff0" /><path d="M1 7.500L2.500 2.500l1.200 3L6.500 3 9 5v2.500H7.500V6h-1v1.500z" fill="#111" /></svg><span className="ml-[7px] w-[165px] shrink-0 overflow-hidden whitespace-nowrap">CentrosPobladosAfectados</span></Row>
        <Row><Check /><div className="ml-[6px] h-px w-4 shrink-0 bg-[#d36c95]" /><em className="ml-[7px] text-[#858585]">Distance</em></Row>
        <Row><svg width="14" height="16" viewBox="0 0 14 16" className="ml-px shrink-0" fill="none" stroke="#888"><rect x=".5" y=".5" width="13" height="15" fill="#eee" /><path d="M1 2.500h12" strokeWidth="3" stroke="#b5b5b5" /><path d="M2.500 6.500h3M8 6.500h4M2.500 9.500h3M8 9.500h4M2.500 12.500h3M8 12.500h4" /></svg><span className="ml-[7px]">Distance</span></Row>
      </div>
      <div className="flex h-[14px] shrink-0 items-center border-t border-[#b6b6b6] bg-gradient-to-b from-[#fdfdfd] to-[#f1f1f1]">
        <div className="flex h-full w-[14px] items-center justify-center border-r border-[#b6b6b6]"><div className="rotate-90"><Caret /></div></div>
        <div className="h-full flex-1" />
        <div className="h-full w-[5px] border-x border-[#b6b6b6] bg-[#dedede]" />
        <div className="flex h-full w-[14px] items-center justify-center"><div className="-rotate-90"><Caret /></div></div>
      </div>
    </div>
  </div>
);

/* ---------- map canvas ---------- */

const roads = [
  'M230 405L266 417Q275 418 283 418.500L345 435.500Q352 437 358 441L386 460 403 475.500 414 482 431 497 450 510 475 531 500 548Q507 552 513 549L560 525Q570 520 585 518L607 514 638 515.500 658 506.500Q664 504 666 498L670 483 673.500 458Q674 454 679 450L724 421Q730 418 737 420L780 431.500Q797 436.500 810 433L858 422.500Q868 420 872 428 876 437 884 449L902 478Q912 494 926 504L955 520',
  'M569 517L572 520 588 550Q590.500 556 590 563L587.500 582 587 597Q590 602 598 612 599 620 598 640L600 653Q602 658 608 662L611 670 616 678Q618 684 617 712L612 734 610 745',
  'M446 740Q462 737 466 731L474 723 484 714.500Q491 711 490.500 718 484 724 481 727L478 742',
  'M248 742Q249 732 252 730 256 728 259 733L265 742',
  'M230 574Q238 566 247 564 260 564 259.500 578 260 585 253 592L251 600 253 607 250 616 252 623 244 634 230 645',
  'M267 417V425Q266 427.500 262 427 251 427 242 430.500L230 429',
  'M230 434L243 438.500Q253 437 262 439 272 441 271 444 266 446 252 442L243 447 250 444 263 452 276 453 288 457 276 456Q268 453 260 457 255 460 248 459.500L230 458.500',
  'M244 447.500L256 440.500 270 442',
  'M256 444L266 451.500 280 454.500',
  'M252 441L270 444.500',
  'M272 453.500L288.500 456.500',
];
const places: [number, number][] = [[274, 362.5], [446, 367], [484, 561], [320, 553], [304, 637], [608, 455], [806, 331], [751, 490], [904, 554]];
const links: [number, number, number, number][] = [
  [278, 372, 274, 418], [449, 374.5, 384.5, 461], [259, 571.5, 324, 562], [251, 623, 309, 646], [503, 548, 488, 570],
  [612.5, 462, 612.5, 514], [810, 339, 830, 430], [775, 431, 756, 499], [871.500, 427, 960, 347.5], [935.5, 509, 908.5, 563],
];
const labels: [string, number, number, number, number][] = [
  ['952.1974', 270, 395, -87, 25], ['2195.9512', 414.5, 411.5, -52, 30], ['1335.8798', 291, 561, -8, 30], ['1245.7954', 282, 629, 20, 28],
  ['1028.7965', 617.5, 487, 90, 29], ['1865.4061', 824, 380.5, 78, 30], ['1436.6397', 759, 465.5, -76, 29], ['2829.6563', 909, 386, -42, 31], ['1222.5863', 916.5, 533, -63, 30],
];

const MapCanvas = () => (
  <div className="ml-[6px] mt-px h-[592px] w-[715px] shrink-0 border border-[#b0b0b0] bg-white">
    <svg width="713" height="590" viewBox="236 148 713 590" fill="none">
      {places.map(([x, y]) => (
        <g key={x} transform={`translate(${x} ${y})`} fill="#000">
          <circle r="21" fill="#ff0" />
          <path d="M-13-9.500L-9.800-2.500H-10.800L-8.300 2H-9.500L-7 7H-12V11.300H-14V7H-19L-16.500 2H-17.700L-15.200-2.500H-16.200Z" />
          <path d="M3-12L12.800-2.500 11.500-1H11V10.800H5.500V3.300H1V10.800H-4.800V-1H-5.500L-6.500-2.500Z" />
        </g>
      ))}
      <g strokeLinejoin="round" strokeLinecap="round">
        {roads.map((d) => <path key={d} d={d} stroke="#000" strokeWidth="5.800" />)}
        {roads.map((d) => <path key={d} d={d} stroke="#f00" strokeWidth="4" />)}
      </g>
      <path d="M236 486.500a1.500 1.500 0 0 1 0 3" fill="#555" />
      {labels.map(([t, x, y, r, w]) => (
        <text key={t} transform={`translate(${x} ${y}) rotate(${r})`} y="3" textAnchor="middle" textLength={w} lengthAdjust="spacingAndGlyphs" fontFamily="Roboto, Liberation Sans, sans-serif" fontSize="8.500" fontWeight="900" fill="#000" stroke="#fff" strokeWidth="1.600" paintOrder="stroke">{t}</text>
      ))}
      {links.map(([a, b, c, d]) => {
        const deg = (Math.atan2(d - b, c - a) * 180) / Math.PI;
        const len = Math.hypot(c - a, d - b);
        return (
          <g key={`${a}-${b}`} transform={`translate(${a} ${b}) rotate(${deg})`}>
            <path d={`M3 0H${len - 3}`} stroke="#a8832f" strokeWidth="1.100" />
            <path d={`M0 0l7.500-3.800v7.600zM${len} 0l-7.500-3.800v7.600z`} fill="#00f" />
          </g>
        );
      })}
    </svg>
  </div>
);

/* ---------- layer styling dock ---------- */

const Btn = ({ children, off }: { children: ReactNode; off?: boolean }) => (
  <div className={off ? 'flex h-[24px] w-7 items-center justify-center rounded-[3px] border border-[#cfcfcf] bg-[#f5f5f5]' : 'flex h-[24px] w-7 items-center justify-center rounded-[3px] border border-[#ababab] bg-gradient-to-b from-white to-[#f1f1f1]'}>{children}</div>
);
const Dashes = ({ t, c, w }: { t: string; c: string; w: string }) => (
  <div className={`${w} flex shrink-0 flex-col items-center`}>
    <svg width="56" height="3" viewBox="0 0 56 3" className="mr-[5px] shrink-0"><path d="M1.500 1.500h54" stroke={c} strokeWidth="2.600" strokeDasharray="2.600 7.500" strokeLinecap="round" fill="none" /></svg>
    <span className="mt-[37px] whitespace-pre text-[12px]">{t}</span>
  </div>
);

const Styling = () => (
  <div className="flex w-[410px] shrink-0 flex-col text-[#111]">
    <div className="flex h-[564px] shrink-0">
      <div className="flex w-[9px] shrink-0 items-center pl-0.5"><i className="mt-7 h-4 border-l border-dotted border-[#bbb]" /></div>
      <div className="flex w-[398px] flex-col">
        <div className="-mr-[2px] pl-px"><DockTitle t="Estilo de capas" /></div>
        <div className="mt-0.5 flex h-6 shrink-0 items-center rounded-[3px] border border-[#ababab] bg-gradient-to-b from-white to-[#f0f0f0] pr-[6px]">
          <Svg><VLine c="#909090" /></Svg><span className="flex-1">Disuelto</span><Caret />
        </div>
        <div className="flex flex-1">
          <div className="flex w-[38px] shrink-0 flex-col">
            <div className="flex h-[30px] shrink-0 items-center pl-0.5 pt-[6px] opacity-75"><Brush /></div>
            <div className="flex flex-1 flex-col bg-[#5e5e5e]">
              <div className="pt-px"><Tag /></div>
              <Svg><text x="4" y="14" fontSize="8.500" fontWeight="700" fontFamily="DejaVu Sans" fill="#444" stroke="#d5dcea" strokeWidth="2.400" strokeLinejoin="round" paintOrder="stroke" textLength="15" lengthAdjust="spacingAndGlyphs">abc</text></Svg>
              <Svg><path d="M11.500 4.500l7 3.500-7 4-7-4z" fill="#f07272" stroke="#444" strokeWidth=".6" /><path d="M4.500 8l7 4v7l-7-3.500z" fill="#67d23a" stroke="#444" strokeWidth=".6" /><path d="M18.500 8l-7 4v7l7-3.500z" fill="#f5df44" stroke="#444" strokeWidth=".6" /></Svg>
              <Svg><path d="M7 15V9h9v6M11.500 7v9" stroke="#d98d2b" strokeWidth="2" /><rect x="8" y="4.500" width="7" height="4" fill="#ef5b5b" /><rect x="4" y="15" width="7" height="5" fill="#f5de58" stroke="#7a6a20" strokeWidth=".6" /><rect x="13" y="15" width="6" height="5" fill="#86b6ea" stroke="#335" strokeWidth=".6" /></Svg>
              <Svg><path d="M5 12c0-4 3-5.500 5-5V5l4 3.500-4 3V9.500c-2 0-2 1-2 2.500z" fill="#6aa57a" /><path d="M9.500 14l4-3v2c4 0 6 3 3.500 5.500-2 1.500-4 .500-5-1 3 0 3-2 1.500-2.500v2z" fill="#e2763a" /></Svg>
            </div>
          </div>
          <div className="ml-[3px] flex w-[357px] shrink-0 flex-col">
            <div className="mt-[6px] flex h-6 shrink-0 items-center rounded-[3px] border border-[#ababab] bg-gradient-to-b from-white to-[#f0f0f0] pl-[7px] pr-[6px]">
              <svg width="13" height="14" viewBox="0 0 13 14" fill="#16b35f" stroke="#0b5c33" strokeWidth=".9"><rect x=".5" y=".5" width="9" height="3.300" /><rect x="2.500" y="5.300" width="10" height="3.300" /><rect x=".5" y="10.100" width="9.500" height="3.300" /></svg>
              <span className="ml-1 flex-1">Símbolo único</span><Caret />
            </div>
            <div className="mt-[6px] flex h-[105px] shrink-0">
              <div className="flex w-[100px] items-center"><div className="h-[5px] w-full border-y border-black bg-[#f00]" /></div>
              <div className="ml-[6px] w-[183px] border border-[#b4b4b4] bg-white">
                <div className="flex h-[18px] items-center pl-[6px] font-bold text-black"><Caret /><div className="ml-2 h-[5px] w-4 border-y border-black bg-[#f00]" /><span className="ml-[6px]">Línea</span></div>
                <div className="flex h-[18px] items-center pl-[43px]"><div className="h-[3px] w-4 bg-[#f00]" /><span className="ml-[6px]">Línea sencilla</span></div>
                <div className="flex h-[18px] items-center pl-[43px]"><div className="h-[5px] w-4 bg-black" /><span className="ml-[6px]">Línea sencilla</span></div>
              </div>
              <div className="ml-[6px] grid h-20 grid-cols-2 gap-x-[6px] gap-y-1">
                <Btn><Svg><path d="M10 5.500h4.500V10H19v4.500h-4.500V19H10v-4.500H5.500V10H10z" fill="#f4fff4" stroke="#4c854c" /><path d="M12.250 7.500v9.500M7.500 12.250h9.500" stroke="#4f8f4f" strokeWidth="1.600" /></Svg></Btn>
                <Btn off><Svg><path d="M12 7l7 10H5z" fill="#d8dbde" stroke="#bfc3c7" /></Svg></Btn>
                <Btn off><Svg><rect x="5.500" y="10" width="13" height="4.500" fill="#faf2f2" stroke="#d5c5c5" /><path d="M7.500 12.300h9" stroke="#d5c5c5" /></Svg></Btn>
                <Btn off><Svg><path d="M12 17l7-10H5z" fill="#d0d3d6" stroke="#bfc3c7" /></Svg></Btn>
                <Btn off><Svg><path d="M8 8.500H5.500v10h10V17M8.500 5.500h10v10h-10z" stroke="#c4c4c4" fill="#f5f5f5" /><rect x="14" y="14" width="4" height="4" fill="#e3e1d8" /></Svg></Btn>
                <Btn off><Svg><path d="M8.500 11V8.500q0-3.500 3.500-3.500 3 0 3.500 2.500" stroke="#c4c4c4" strokeWidth="1.600" /><rect x="6" y="11.500" width="12" height="7" rx="1" fill="#d6d3c8" stroke="#c5c1b5" /></Svg></Btn>
              </div>
            </div>
            <div className="mt-[6px] h-px shrink-0 bg-[#9c9c9c]" />
            <div className="flex w-[348px] flex-1 flex-col">
              <div className="mt-2 flex h-[22px] shrink-0 items-center">
                <span className="w-[53px]">Unidad</span>
                <div className="flex h-[22px] flex-1 items-center rounded-[3px] border border-[#ababab] bg-gradient-to-b from-white to-[#f0f0f0] pl-1 pr-[6px]"><span className="flex-1">Milímetros</span><Caret /></div>
              </div>
              <div className="mt-px flex h-5 shrink-0 items-center">
                <span className="w-[54px]">Opacidad</span>
                <div className="flex w-[190px] items-center"><div className="h-[5px] flex-1 rounded-sm border border-[#23638f] bg-[#3fa1dc]" /><div className="size-[13px] rounded-sm border border-[#a0a0a0] bg-white" /></div>
                <div className="ml-1 flex h-5 w-[100px] items-center rounded-[3px] border border-[#ababab] bg-white pl-1"><span className="flex-1">100.0 %</span><Spin dimTop /></div>
              </div>
              <div className="mt-px flex h-7 shrink-0 items-center">
                <span className="w-[53px]">Color</span>
                <div className="flex h-7 w-[283px] items-center rounded-[3px] border border-[#ababab] bg-[#f5f5f5] px-1"><div className="h-4 flex-1 rounded-[3px] bg-[#f00]" /></div>
                <div className="flex h-7 w-3 items-center justify-center rounded-[3px] border border-[#ababab] bg-[#f8f8f8]"><Caret /></div>
              </div>
              <div className="mt-5 flex h-[22px] shrink-0 items-center">
                <span className="w-[52px]">Anchura</span>
                <div className="flex h-[22px] w-[260px] items-center rounded-[3px] border border-[#ababab] bg-white pl-1"><span className="flex-1">1.26000</span><Spin /></div>
                <svg className="ml-[9px]" width="24" height="18" viewBox="0 0 24 18" fill="none" stroke="#777"><path d="M5 3.500L.500 9 5 14z" fill="#888" /><rect x="5.500" y="1.500" width="12" height="15" fill="#fff" /><path d="M8 5.500h8" strokeWidth="2" /><path d="M8 9h8M8 12.500h7" /><path d="M16 13h7l-3.500 4z" fill="#444" stroke="none" /></svg>
              </div>
              <div className="mt-[25px] h-px shrink-0 bg-[#a6a6a6]" />
              <div className="mt-[6px] flex h-[22px] shrink-0 items-center">
                <div className="flex h-[22px] w-[318px] items-center rounded-[3px] border border-[#ababab] bg-white pl-[10px]">
                  <Mag /><span className="ml-[5px] flex-1">Favoritos</span><Clear /><div className="ml-[9px] flex h-full w-5 items-center justify-center border-l border-[#b6b6b6] bg-[#f8f8f8]"><Caret /></div>
                </div>
                <div className="ml-[6px]"><StyleIcon /></div>
              </div>
              <div className="mt-[5px] flex h-[90px] shrink-0 overflow-hidden border border-[#b0b0b0] bg-white">
                <div className="flex flex-1 overflow-hidden pl-[3px] pt-[41px]">
                  <Dashes t="dash  black" c="#000" w="w-[91px]" /><Dashes t="dash blue" c="#3e78b4" w="w-[91px]" /><Dashes t="dash green" c="#4dae45" w="w-[91px]" />
                </div>
                <div className="flex w-[15px] flex-col border-l border-[#b0b0b0] bg-[#dedede]">
                  <div className="flex h-[14px] items-center justify-center border-b border-[#b0b0b0] bg-[#f6f6f6]"><div className="rotate-180"><Caret /></div></div>
                  <div className="h-[27px] border-b border-[#b0b0b0] bg-[#f9f9f9]" /><div className="flex-1" />
                  <div className="flex h-[14px] items-center justify-center border-t border-[#b0b0b0] bg-[#f6f6f6]"><Caret /></div>
                </div>
              </div>
              <div className="mt-[6px] flex h-[23px] shrink-0 items-center">
                <div className="flex h-[23px] w-6 items-center justify-center rounded-[3px] border border-[#a8a8a8] bg-[#dadada]"><svg width="14" height="14" viewBox="0 0 14 14" fill="none"><rect x=".5" y=".5" width="13" height="13" fill="#d8e6f4" stroke="#a9c2dc" /><path d="M2 3h10M2 7h10M2 11h10" stroke="#5b8ac0" strokeWidth="2" strokeDasharray="2 2" /></svg></div>
                <TableIcon />
                <div className="ml-auto flex h-[22px] w-[100px] items-center justify-center whitespace-nowrap rounded-[3px] border border-[#ababab] bg-gradient-to-b from-white to-[#f1f1f1]">Guardar símbolo</div>
                <div className="ml-[6px] flex h-[22px] w-20 items-center justify-between rounded-[3px] border border-[#ababab] bg-gradient-to-b from-white to-[#f1f1f1] pl-[6px] pr-0.5">Avanzado<div className="scale-75"><Caret /></div></div>
              </div>
              <div className="mt-[22px] flex h-[14px] shrink-0 items-center pl-[5px] font-bold text-black"><svg width="8" height="11" viewBox="0 0 8 11"><path d="M.5.500L7 5.500l-6.500 5z" fill="#444" stroke="#222" /></svg><span className="ml-[9px]">Representación de capas</span></div>
            </div>
            <div className="flex h-6 shrink-0 items-center">
              <div className="flex h-6 w-6 items-center justify-center rounded-[3px] border border-[#ababab] bg-[#f9f9f9]"><Undo c="#e07f43" /></div>
              <div className="ml-[6px] flex h-6 w-6 items-center justify-center rounded-[3px] border border-[#ababab] bg-[#f9f9f9]"><Undo c="#7fb58a" flip /></div>
              <div className="ml-[75px] flex items-center gap-[5px]"><Check on /><span className="whitespace-nowrap">Actualización en vivo</span></div>
              <div className="ml-auto flex h-6 w-20 items-center justify-center gap-[5px] rounded-[3px] border border-[#ababab] bg-gradient-to-b from-white to-[#f1f1f1] pl-0.5"><svg width="9" height="9" viewBox="0 0 9 9" fill="none" stroke="#333" strokeWidth="1.400"><path d="M1 5l2 2.500L8 1" /></svg>Aplicar</div>
            </div>
          </div>
        </div>
      </div>
    </div>
    <div className="mt-1 flex h-6 shrink-0 pl-[6px]">
      <div className="flex h-6 w-[108px] items-center justify-center rounded-b-[3px] border border-t-0 border-[#b0b0b0] bg-[#fafafa] pt-px">Estilo de capas</div>
      <div className="flex h-[22px] w-[212px] items-center justify-center whitespace-nowrap border-b border-r border-t border-[#b5b5b5] bg-[#dcdcdc] pr-[2px]">Caja de herramientas de Proces...</div>
      <div className="flex h-[22px] w-[84px] items-center justify-center border-b border-r border-t border-[#b5b5b5] bg-[#dcdcdc]">Navegador</div>
    </div>
  </div>
);

/* ---------- status bar ---------- */

const StatusBar = () => (
  <div className="flex h-[28px] shrink-0 items-center whitespace-nowrap pl-1 text-[#111]">
    <div className="flex h-[22px] w-80 shrink-0 items-center rounded-[3px] border border-[#ababab] bg-white pl-2 text-[#8c8c8c]"><Mag /><span className="ml-[6px]">Escriba para localizar (Ctrl+K)</span></div>
    <span className="ml-2 w-[78px] shrink-0 overflow-hidden text-black">Pan distance 6</span>
    <span className="ml-[9px] w-[70px] shrink-0">Coordenada</span>
    <div className="mb-px flex h-[22px] w-[111px] shrink-0 items-center rounded-[3px] border border-[#ababab] bg-white pl-[7px] text-black">816941,8526188</div>
    <svg className="ml-1 shrink-0" width="16" height="16" viewBox="0 0 16 16" fill="none" stroke="#333" strokeWidth="1.100"><ellipse cx="4" cy="5" rx="2" ry="4" transform="rotate(-30 4 5)" fill="#999" /><ellipse cx="8" cy="4" rx="1.800" ry="3.500" transform="rotate(-20 8 4)" /><circle cx="10" cy="11" r="3.500" /><circle cx="10" cy="11" r="1" /><path d="M2 9l5 6M12 4l3-3M13 7l2-1" /></svg>
    <span className="ml-[13px] w-[39px] shrink-0">Escala</span>
    <div className="flex h-[22px] w-[89px] shrink-0 items-center rounded-[3px] border border-[#bcbcbc] bg-[#efefef] pl-1 text-[#bebebe]"><span className="flex-1">1:85330</span><div className="flex h-full w-5 items-center justify-center border-l border-[#bcbcbc]"><Caret dim /></div></div>
    <div className="ml-[6px] flex h-[23px] w-6 shrink-0 items-center justify-center rounded-[3px] border border-[#a8a8a8] bg-[#d6d6d6]"><svg width="14" height="16" viewBox="0 0 14 16" fill="none"><path d="M3.500 8V5q0-4 3.500-4t3.500 4v3" stroke="#777" strokeWidth="1.300" /><rect x="1" y="7.500" width="12" height="7.500" rx="1" fill="#666" /></svg></div>
    <span className="ml-[3px] w-[73px] shrink-0">Amplificador</span>
    <div className="flex h-[22px] w-[95px] shrink-0 items-center rounded-[3px] border border-[#ababab] bg-white pl-1 text-black"><span className="flex-1">111%</span><Clear /><div className="ml-[10px] h-full"><Spin /></div></div>
    <span className="ml-[9px] w-[58px] shrink-0">Rotación</span>
    <div className="flex h-[22px] w-[91px] shrink-0 items-center rounded-[3px] border border-[#ababab] bg-white pl-1 text-black"><span className="flex-1">0.0 °</span><Spin /></div>
    <div className="ml-[6px] flex items-center gap-[5px]"><Check on /><span>Representar</span></div>
    <svg className="ml-4 shrink-0" width="15" height="14" viewBox="0 0 15 14" fill="none" stroke="#666" strokeWidth=".8"><circle cx="7.500" cy="7" r="6" fill="#bbb" /><path d="M0 7h15M7.500 0v14M3 3.500h9M3 10.500h9M7.500 1.500c-4 3-4 8 0 11M7.500 1.500c4 3 4 8 0 11" /></svg>
    <span className="ml-[3px] w-[68px] shrink-0">EPSG:32718</span>
    <svg className="ml-[22px] shrink-0" width="17" height="16" viewBox="0 0 17 16"><path d="M8.500 1c5 0 8 2.200 8 5.500 0 2-1 3.500-2.500 4.300l1.500 4.200-5-3.200H8.500c-5 0-8-2-8-5.300s3-5.500 8-5.500z" fill="#5c5c5c" /><path d="M4 6.500h2.200M7.400 6.500h2.200M10.800 6.500H13" stroke="#fff" strokeWidth="1.800" /></svg>
  </div>
);

export default function App() {
  return (
    <div className="flex h-[768px] w-[1360px] flex-col overflow-hidden bg-[#efefef] font-['DejaVu_Sans',sans-serif] text-[11px] leading-[15px]">
      <TopPanel />
      <TitleBar />
      <MenuBar />
      <ToolRow1 />
      <ToolRow2 />
      <div className="flex h-4 shrink-0 items-center border-b border-[#b4b4b4] bg-gradient-to-b from-[#fafafa] to-[#efefef]"><Handle first /></div>
      <div className="flex h-[594px] shrink-0">
        <div className="flex h-[593px]"><Layers /></div>
        <MapCanvas />
        <Styling />
      </div>
      <StatusBar />
    </div>
  );
}
